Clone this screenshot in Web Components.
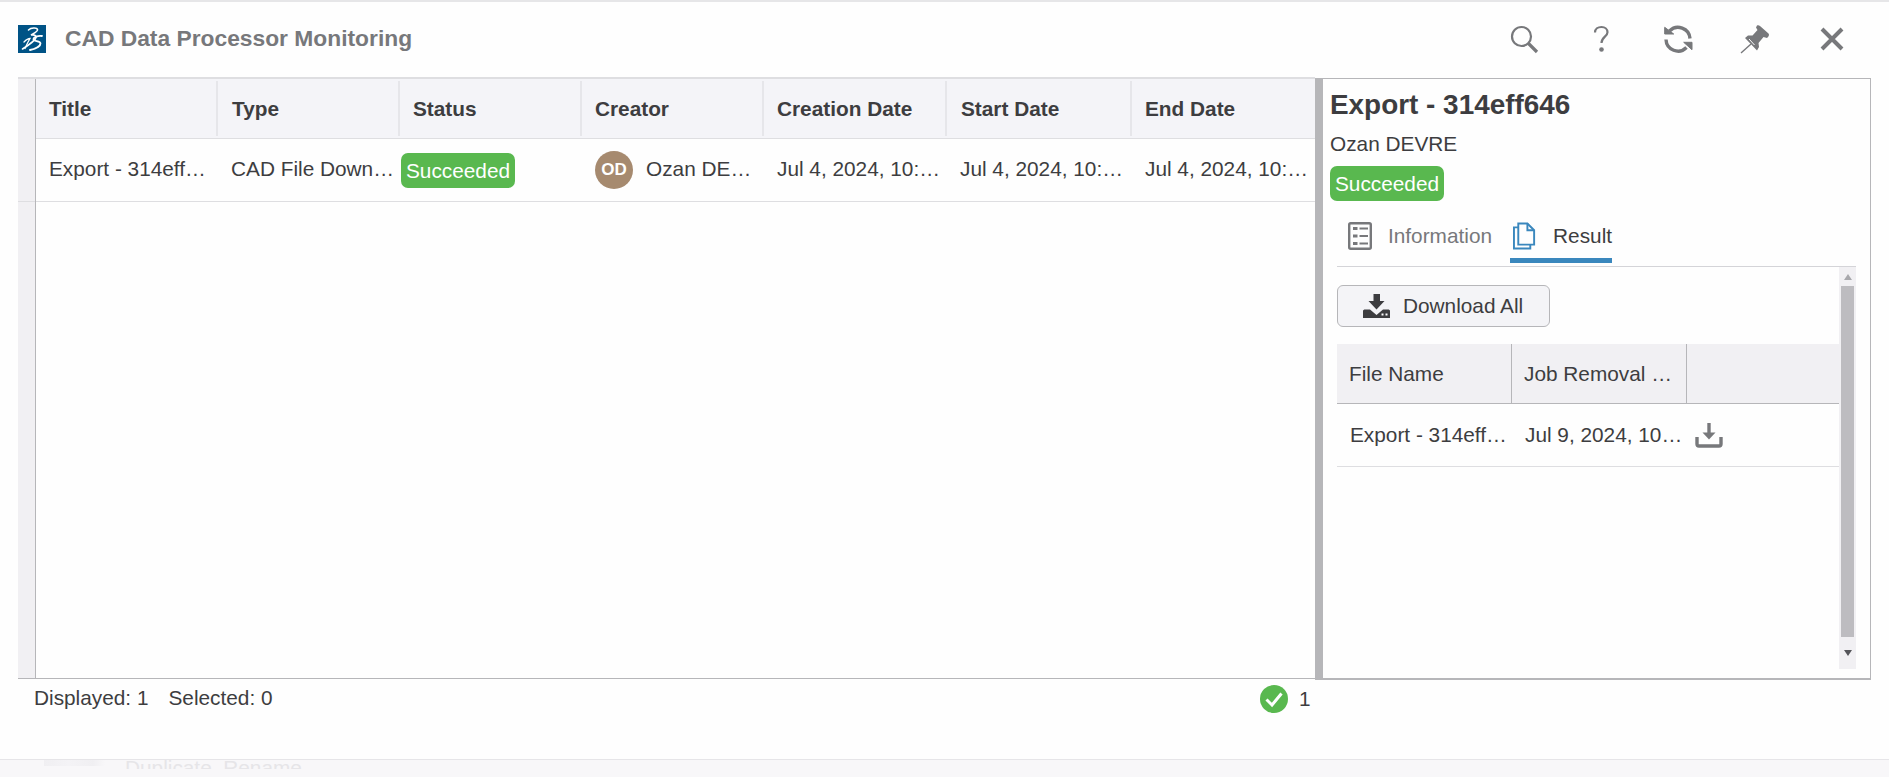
<!DOCTYPE html>
<html>
<head>
<meta charset="utf-8">
<title>CAD Data Processor Monitoring</title>
<style>
  html, body { margin: 0; height: 100%; }
  body { background: #fefefe; color: #3d3d40; font-family: "Liberation Sans", Arial, sans-serif; overflow: hidden; }
</style>
</head>
<body>
<monitor-app></monitor-app>

<script>
const ICONS = {
  logo: `<svg width="28" height="28" viewBox="0 0 28 28" fill="none" stroke="#fff" stroke-linecap="round"><rect width="28" height="28" fill="#005386" stroke="none"/>
    <path d="M10.5 5C13 2.500 19 2.500 19.500 4.500C20 6.500 15.500 8.500 13 10C16 9.500 18.500 10.500 18 12.500C17.500 15 10 20.500 4.500 24" stroke-width="1.600"/>
    <path d="M6 17C8 15 10.500 13.500 12 13.500C10.500 16 8.500 20 7 23.500" stroke-width="1.300"/>
    <path d="M24 11C20 10.500 15.500 12 15.500 14.500C15.500 16.500 22.500 16 22.500 18.500C22.500 21.500 16.500 24 12 25" stroke-width="1.800"/></svg>`,
  search: `<svg width="30" height="30" viewBox="0 0 30 30" fill="none" stroke="#77787b"><circle cx="12.5" cy="12.5" r="9.5" stroke-width="2.2"/><path d="M19.5 19.5L28 28" stroke-width="3.2"/></svg>`,
  help: `<svg width="30" height="30" viewBox="0 0 30 30" fill="none"><path d="M9 8.500C9 5 12 3 15.500 3C19 3 21.500 5.200 21.500 8.200C21.500 12.500 15.500 13 15.500 19" stroke="#77787b" stroke-width="2.200"/><circle cx="15.500" cy="25.500" r="2.300" fill="#77787b"/></svg>`,
  refresh: `<svg width="30" height="30" viewBox="0 0 30 30" fill="none"><path d="M6.500 7A12 12 0 0 1 27 14.500M3 15.500A12 12 0 0 0 23.500 23.500" stroke="#77787b" stroke-width="3.400"/><path d="M1.700 3.300V10H10.700ZM20.700 18.300H29V25.700Z" fill="#77787b" stroke="#77787b" stroke-width="1"/></svg>`,
  pin: `<svg width="30" height="30" viewBox="0 0 30 30" fill="none"><path d="M17 1.500C18 1 19 1.200 20 2L28.500 9.500C29.500 10.500 29 12.500 27 14L23.500 13L18.500 19L19 23L17 26.500L5 14L8 11.500L12.500 11.500L17.500 6L16 3.500Z" fill="#77787b"/><path d="M9 15L14.500 21" stroke="#fefefe" stroke-width="1"/><path d="M11 20L1 29" stroke="#77787b" stroke-width="1.400"/></svg>`,
  close: `<svg width="30" height="30" viewBox="0 0 30 30" fill="none"><path d="M5 5L25 25M25 5L5 25" stroke="#77787b" stroke-width="4"/></svg>`,
  info: `<svg width="24" height="28" viewBox="0 0 24 28" fill="none"><rect x="1.200" y="1.200" width="21.600" height="25.600" rx="1.500" stroke="#77787b" stroke-width="2.400"/><path d="M5 6.500H9.500M5 14H9.500M5 21.500H9.500" stroke="#77787b" stroke-width="3.200"/><path d="M11.500 6.500H20M11.500 14H20M11.500 21.500H20" stroke="#77787b" stroke-width="1.800"/></svg>`,
  files: `<svg width="24" height="28" viewBox="0 0 24 28" fill="none" stroke="#3a87bd" stroke-width="2"><path d="M5.500 23V1H15L22 8V23Z"/><path d="M15 1V8H22"/><path d="M5.500 5H1V27H18V23"/></svg>`,
  downloadAll: `<svg width="27" height="24" viewBox="0 0 27 24"><path d="M10.500 0H17V7H21.500L13.500 15.500L5.500 7H10.500Z" fill="#3d3d40"/><path d="M0 17C0 16 1 15.500 2 15.500H7L13.500 21L20 15.500H25C26 15.500 27 16 27 17V24H0Z" fill="#3d3d40"/><path d="M18.500 20.500H20.500M22.500 20.500H24.500" stroke="#fff" stroke-width="2"/></svg>`,
  download: `<svg width="28" height="26" viewBox="0 0 28 26" fill="none" stroke="#77787b"><path d="M14 1V13" stroke-width="3.400"/><path d="M7.500 10.500H20.500L14 17.500Z" fill="#77787b" stroke="none"/><path d="M2 15V22C2 23.500 3 24 4 24H24C25 24 26 23.500 26 22V15" stroke-width="3.400"/></svg>`,
  check: `<svg width="28" height="28" viewBox="0 0 28 28"><circle cx="14" cy="14" r="14" fill="#59b84f"/><path d="M6.500 14.500L12 20L21.500 8.500" fill="none" stroke="#fff" stroke-width="3"/></svg>`
};

class StatusBadge extends HTMLElement {
  constructor () {
    super();
    this.attachShadow({mode: 'open'}).innerHTML = `
      <style>
        :host {
          background: #59b84f;
          border-radius: 7px;
          box-sizing: border-box;
          color: #fff;
          display: inline-block;
          font-size: 20.8px;
          height: 35px;
          line-height: 35px;
          padding: 0 5px;
          white-space: nowrap;
        }
      </style>
      <slot></slot>`;
  }
}

class AppHeader extends HTMLElement {
  constructor () {
    super();
    this.attachShadow({mode: 'open'}).innerHTML = `
      <style>
        :host {
          align-items: center;
          border-top: 2px solid #e6e6e8;
          box-sizing: border-box;
          display: flex;
          height: 77px;
          padding: 0 42px 1px 18px;
        }
        .logo { display: flex; margin-right: 19px; }
        h1 { color: #77787b; flex: 1; font-size: 22.8px; font-weight: bold; margin: 0; padding-bottom: 2px; }
        .tools { display: flex; gap: 47px; }
        .tools span { display: flex; }
      </style>
      <span class="logo">${ICONS.logo}</span>
      <h1>CAD Data Processor Monitoring</h1>
      <div class="tools">
        <span>${ICONS.search}</span>
        <span>${ICONS.help}</span>
        <span>${ICONS.refresh}</span>
        <span>${ICONS.pin}</span>
        <span>${ICONS.close}</span>
      </div>`;
  }
}

class JobGrid extends HTMLElement {
  constructor () {
    super();
    this.attachShadow({mode: 'open'}).innerHTML = `
      <style>
        :host {
          align-self: flex-start;
          border-bottom: 1px solid #b6b6b9;
          border-top: 2px solid #dedee1;
          box-sizing: border-box;
          display: flex;
          flex: none;
          height: 602px;
          width: 1297px;
        }
        .gutter { background: #f1f0f3; border-right: 1px solid #b6b6b9; flex: none; width: 17px; }
        .gutter::before { border-bottom: 1px solid #dedee1; content: ''; display: block; height: 122px; }
        .rows { flex: 1; font-size: 20.8px; min-width: 0; }
        .row { display: grid; grid-template-columns: 182px 182px 182px 182px 183px 185px 183px; }
        .head { background: #f4f4f8; border-bottom: 1px solid #dedee1; box-sizing: border-box; font-weight: bold; height: 60px; }
        .head div { align-items: center; border-left: 2px solid #e6e6ea; display: flex; margin: 2px 0 2px -2px; padding-left: 13px; }
        .head div:first-child { border-left: 0; margin-left: 0; }
        .head div:nth-child(2), .head div:nth-child(6) { padding-left: 14px; }
        .body { align-items: center; border-bottom: 1px solid #dedee1; box-sizing: border-box; height: 63px; }
        .body > * { min-width: 0; padding: 0 4px 0 13px; }
        .text { overflow: hidden; padding-bottom: 2px; text-overflow: ellipsis; white-space: nowrap; }
        .body > .status { padding: 0 0 0 1px; }
        .creator { align-items: center; display: flex; gap: 13px; }
        .avatar {
          align-items: center;
          background: #a68a6f;
          border-radius: 50%;
          color: #fff;
          display: flex;
          flex: none;
          font-size: 17px;
          font-weight: bold;
          height: 38px;
          justify-content: center;
          width: 38px;
        }
      </style>
      <div class="gutter"></div>
      <div class="rows">
        <div class="row head">
          <div>Title</div><div>Type</div><div>Status</div><div>Creator</div>
          <div>Creation Date</div><div>Start Date</div><div>End Date</div>
        </div>
        <div class="row body">
          <div class="text">Export - 314eff646</div>
          <div class="text">CAD File Download</div>
          <div class="status"><status-badge>Succeeded</status-badge></div>
          <div class="creator"><span class="avatar">OD</span><span class="text">Ozan DEVRE</span></div>
          <div class="text">Jul 4, 2024, 10:15 AM</div>
          <div class="text">Jul 4, 2024, 10:15 AM</div>
          <div class="text">Jul 4, 2024, 10:16 AM</div>
        </div>
      </div>`;
  }
}

class FileTable extends HTMLElement {
  constructor () {
    super();
    this.attachShadow({mode: 'open'}).innerHTML = `
      <style>
        :host { display: block; font-size: 20.8px; }
        .row { display: grid; grid-template-columns: 175px 175px 1fr; }
        .head { background: #f1f0f3; border-bottom: 1px solid #b6b6b9; box-sizing: border-box; height: 60px; }
        .head div { align-items: center; border-right: 1px solid #b6b6b9; display: flex; min-width: 0; padding: 0 12px; white-space: nowrap; }
        .head div:last-child { border-right: 0; }
        .body { align-items: center; border-bottom: 1px solid #dedee1; box-sizing: border-box; height: 63px; }
        .body .text { overflow: hidden; padding: 0 2px 0 13px; text-overflow: ellipsis; white-space: nowrap; }
        .act { display: flex; padding-left: 8px; }
        .clip { overflow: hidden; text-overflow: ellipsis; }
      </style>
      <div class="row head">
        <div>File Name</div><div><span class="clip">Job Removal Date</span></div><div></div>
      </div>
      <div class="row body">
        <div class="text">Export - 314eff646.zip</div>
        <div class="text">Jul 9, 2024, 10:16 AM</div>
        <div class="act">${ICONS.download}</div>
      </div>`;
  }
}

class DetailPanel extends HTMLElement {
  constructor () {
    super();
    this.attachShadow({mode: 'open'}).innerHTML = `
      <style>
        :host {
          border-bottom: 2px solid #b6b6b9;
          border-left: 8px solid #b6b6b9;
          border-right: 1px solid #b6b6b9;
          border-top: 1px solid #b6b6b9;
          box-sizing: border-box;
          display: flex;
          flex: none;
          flex-direction: column;
          height: 602px;
          margin-top: 1px;
          width: 556px;
        }
        .info { padding: 8px 0 0 7px; }
        h2 { font-size: 27.9px; line-height: 36px; margin: 0; }
        .name { font-size: 20.8px; line-height: 24px; margin: 9px 0 10px; }
        status-badge { display: block; width: fit-content; }
        .tabs { border-bottom: 1px solid #d4d4d8; box-sizing: border-box; display: flex; font-size: 20.8px; height: 66px; margin: 0 14px; padding-left: 11px; }
        .tab { align-items: center; border-bottom: 5px solid transparent; box-sizing: border-box; display: flex; gap: 16px; height: 62px; padding-top: 13px; }
        .tab.off { color: #77787b; margin-right: 18px; }
        .tab.on { border-bottom-color: #3a87bd; gap: 17px; padding-left: 3px; width: 102px; }
        .tab svg { display: block; }
        .body { display: flex; flex: 1; margin: 0 14px; min-height: 0; }
        .content { flex: 1; min-width: 0; padding-top: 18px; }
        button {
          align-items: center;
          background: #f4f4f7;
          border: 1px solid #b6b6b9;
          border-radius: 6px;
          box-sizing: border-box;
          color: #3d3d40;
          display: flex;
          font: 20.8px "Liberation Sans", Arial, sans-serif;
          gap: 13px;
          height: 42px;
          margin-bottom: 17px;
          padding: 0 0 0 25px;
          width: 213px;
        }
        button svg { display: block; }
        .scroll { align-items: center; background: #f1f0f3; box-sizing: border-box; display: flex; flex: none; flex-direction: column; height: 402px; padding: 0 2px; width: 17px; }
        .up, .down { align-items: center; display: flex; flex: none; height: 19px; justify-content: center; width: 13px; }
        .up::before { border: 4px solid transparent; border-bottom: 6px solid #a8a8ac; border-top: 0; content: ''; }
        .down::before { border: 4px solid transparent; border-bottom: 0; border-top: 6px solid #55555a; content: ''; }
        .thumb { background: #bdbcc0; flex: 1; width: 13px; }
        .down { height: 32px; }
      </style>
      <div class="info">
        <h2>Export - 314eff646</h2>
        <div class="name">Ozan DEVRE</div>
        <status-badge>Succeeded</status-badge>
      </div>
      <div class="tabs">
        <div class="tab off">${ICONS.info}<span>Information</span></div>
        <div class="tab on">${ICONS.files}<span>Result</span></div>
      </div>
      <div class="body">
        <div class="content">
          <button>${ICONS.downloadAll}<span>Download All</span></button>
          <file-table></file-table>
        </div>
        <div class="scroll"><span class="up"></span><span class="thumb"></span><span class="down"></span></div>
      </div>`;
  }
}

class StatusFooter extends HTMLElement {
  constructor () {
    super();
    this.attachShadow({mode: 'open'}).innerHTML = `
      <style>
        :host {
          align-items: flex-start;
          box-sizing: border-box;
          display: flex;
          font-size: 20.8px;
          height: 79px;
          padding: 5px 0 0 34px;
        }
        .counts { display: flex; flex: none; gap: 20px; line-height: 26px; width: 1226px; }
        .done { align-items: center; display: flex; gap: 11px; line-height: 26px; }
        .done svg { display: block; }
      </style>
      <div class="counts"><span>Displayed: 1</span><span>Selected: 0</span></div>
      <div class="done">${ICONS.check}<span>1</span></div>`;
  }
}

class MonitorApp extends HTMLElement {
  constructor () {
    super();
    this.attachShadow({mode: 'open'}).innerHTML = `
      <style>
        :host { display: flex; flex-direction: column; height: 777px; }
        .main { display: flex; padding-left: 18px; }
        .under {
          background: #f8f7f9;
          border-top: 1px solid #e6e5e8;
          color: #e6e5e8;
          display: flex;
          flex: 1;
          font-size: 20.8px;
          overflow: hidden;
          padding-left: 44px;
        }
        .smudge { background: linear-gradient(90deg, #f0eff2, #f4f3f6 40%, #f0eff2 80%, #f8f7f9); flex: none; height: 6px; margin-right: 20px; width: 61px; }
        .under span { display: block; height: 9px; overflow: hidden; }
        .under b { display: block; font-weight: normal; line-height: 24px; margin-top: -4px; white-space: nowrap; }
      </style>
      <app-header></app-header>
      <div class="main"><job-grid></job-grid><detail-panel></detail-panel></div>
      <status-footer></status-footer>
      <div class="under"><div class="smudge"></div><span><b>Duplicate, Rename</b></span></div>`;
  }
}

customElements.define('status-badge', StatusBadge);
customElements.define('app-header', AppHeader);
customElements.define('job-grid', JobGrid);
customElements.define('file-table', FileTable);
customElements.define('detail-panel', DetailPanel);
customElements.define('status-footer', StatusFooter);
customElements.define('monitor-app', MonitorApp);
</script>
</body>
</html>
